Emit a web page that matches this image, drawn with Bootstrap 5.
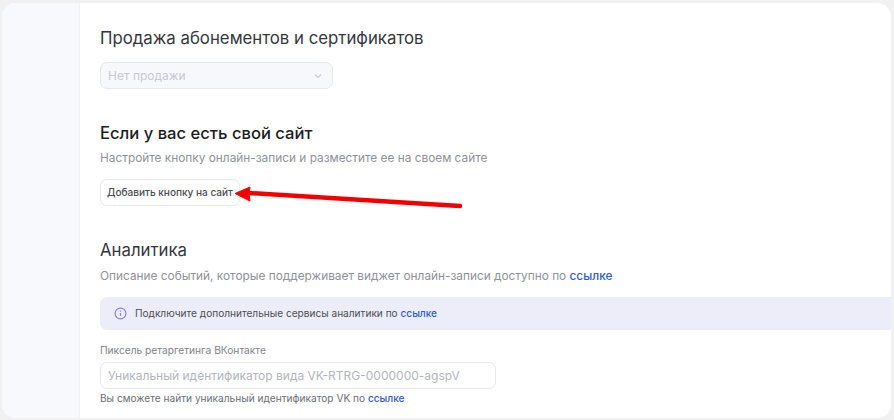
<!DOCTYPE html>
<html lang="ru">
<head>
    <meta charset="UTF-8">
    <title>Настройки виджета</title>
    <link href="https://cdn.jsdelivr.net/npm/bootstrap@5.3.0/dist/css/bootstrap.min.css" rel="stylesheet">
    <style>
        html, body { height: 100%; }
        body { width: 894px; height: 420px; overflow: hidden; background: #f1f1f2; font-family: "Inter", "Liberation Sans", sans-serif; color: #2d2f36; padding: 3px 3px 2px 2px; }
        .app-frame { position: relative; height: 415px; background: #fff; border-radius: 14px; overflow: hidden; }
        .side-strip { width: 78px; background: #f7f9fd; border-right: 1px solid #f0f1f6; }
        .main-pane { padding: 23px 0 0 20px; min-width: 0; }
        .sec-title { font-size: 16.8px; line-height: 24px; font-weight: 400; margin: 0; color: #35373d; }
        .sec-title-site { font-size: 16.6px; font-weight: 500; color: #1c1d21; margin-top: 32px; }
        .sec-title-stats { margin-top: 32px; }
        .sec-note { font-size: 11.85px; line-height: 18px; color: #8f919b; margin: 4px 0 0; }
        .sec-note-stats { margin-top: 5px; }
        .sale-select { width: 233px; height: 27px; margin-top: 12px; padding: 0 10px 0 7px; background: #f7f8fc; border: 1px solid #e6e8f2; border-radius: 7px; font-size: 12px; color: #c5c8d2; }
        .site-btn { height: 27px; width: 140px; margin-top: 12px; padding: 0 0 0 6px; font-size: 10.05px; font-weight: 500; color: #4b4d54; background: #fff; border: 1px solid #e6e8f2; border-radius: 7px; text-align: left; }
        .ref-link { color: #2f5bd7; text-decoration: none; font-weight: 500; }
        .info-box { height: 33px; margin-top: 12px; padding-left: 14px; background: #ecedf9; border-radius: 7px 0 0 7px; font-size: 10.1px; color: #4b4d54; }
        .field-label { font-size: 10.2px; line-height: 14px; color: #81838d; margin: 13px 0 5px; }
        .pixel-input { width: 396px; height: 27px; padding: 0 7px; font-size: 12px; border: 1px solid #e6e8f2; border-radius: 7px; color: #2d2f36; }
        .pixel-input::placeholder { color: #b3b5be; opacity: 1; }
        .field-hint { font-size: 10.15px; line-height: 14px; color: #6d6f79; margin: 2px 0 0; }
        .red-arrow { position: absolute; left: 0; top: 0; pointer-events: none; }
    </style>
</head>
<body>
    <div class="app-frame d-flex">
        <div class="side-strip flex-shrink-0"></div>
        <div class="main-pane flex-grow-1">
            <h2 class="sec-title">Продажа абонементов и сертификатов</h2>
            <div class="sale-select d-flex align-items-center justify-content-between">
                <span>Нет продажи</span>
                <svg width="8" height="6" viewBox="0 0 8 6" fill="none" stroke="#c5c8d2" stroke-width="1.2"><path d="M1 1.5l3 3 3-3"/></svg>
            </div>

            <h2 class="sec-title sec-title-site">Если у вас есть свой сайт</h2>
            <p class="sec-note">Настройте кнопку онлайн-записи и разместите ее на своем сайте</p>
            <button type="button" class="site-btn d-block">Добавить кнопку на сайт</button>

            <h2 class="sec-title sec-title-stats">Аналитика</h2>
            <p class="sec-note sec-note-stats">Описание событий, которые поддерживает виджет онлайн-записи доступно по <a href="#" class="ref-link">ссылке</a></p>
            <div class="info-box d-flex align-items-center gap-2">
                <svg width="13" height="13" viewBox="0 0 13 13" fill="none" stroke="#8b7df0" stroke-width="1.2"><circle cx="6.5" cy="6.5" r="5.4"/><path d="M6.5 6v3M6.5 3.7v1"/></svg>
                <span>Подключите дополнительные сервисы аналитики по <a href="#" class="ref-link">ссылке</a></span>
            </div>
            <div class="field-label">Пиксель ретаргетинга ВКонтакте</div>
            <input type="text" class="pixel-input d-block" placeholder="Уникальный идентификатор вида VK-RTRG-0000000-agspV">
            <p class="field-hint">Вы сможете найти уникальный идентификатор VK по <a href="#" class="ref-link">ссылке</a></p>
        </div>
        <svg class="red-arrow" width="889" height="415" viewBox="0 0 889 415" fill="none">
            <path d="M246 190L458 203" stroke="#f40000" stroke-width="4.5" stroke-linecap="round"/>
            <path d="M233 190.5L248 184L247 191L248 198Z" fill="#f40000" stroke="#f40000" stroke-linejoin="round"/>
        </svg>
    </div>
    <script src="https://cdn.jsdelivr.net/npm/bootstrap@5.3.0/dist/js/bootstrap.bundle.min.js"></script>
</body>
</html>
